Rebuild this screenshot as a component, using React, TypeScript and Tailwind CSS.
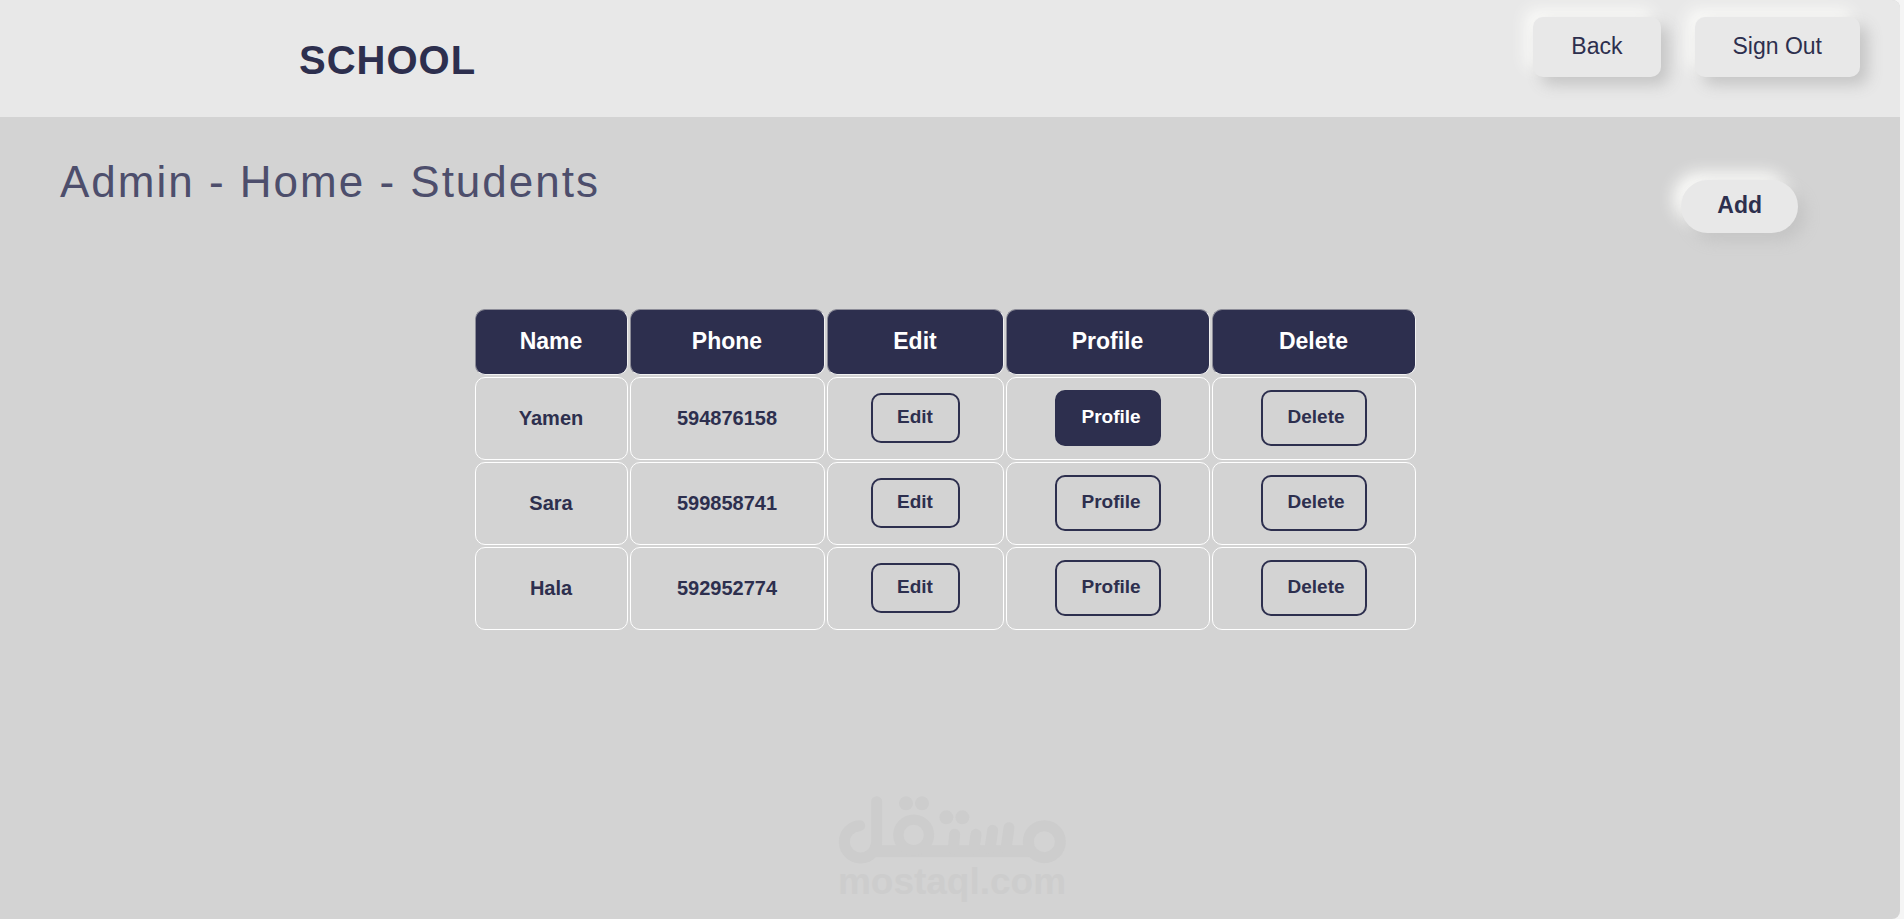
const students = [
  { name: "Yamen", phone: "594876158", active: true },
  { name: "Sara", phone: "599858741", active: false },
  { name: "Hala", phone: "592952774", active: false },
];

export default function App() {
  return (
    <div className="min-h-screen bg-[#f5f5f5] pr-1 font-['Liberation_Sans',Arial,sans-serif] text-[#2d2f4e]">
      <div className="flex min-h-screen flex-col overflow-hidden rounded-r-lg bg-[#d3d3d3]">
        <header className="flex min-h-[117px] items-start justify-between bg-[#e8e8e8] pr-10 pl-[299px]">
          <div className="pt-[30px] text-[40px] leading-[60px] font-bold tracking-[1px]">SCHOOL</div>
          <nav className="flex gap-[34px] pt-[17px]">
            <HeaderButton label="Back" />
            <HeaderButton label="Sign Out" />
          </nav>
        </header>

        <main>
          <div className="flex items-start justify-between pt-[35px] pr-[102px] pl-[60px]">
            <h1 className="text-[44px] leading-[60px] tracking-[2px] text-[#4d4e6c]">Admin - Home - Students</h1>
            <button
              type="button"
              className="mt-[28px] h-[53px] rounded-full bg-[#e8e8e8] px-9 pb-0.5 text-[23px] font-bold shadow-[8px_8px_15px_#c5c5c5,-8px_-8px_15px_#fafaf8]"
            >
              Add
            </button>
          </div>
          <div className="mt-[74px] flex justify-center pr-[10px]">
            <StudentsTable />
          </div>
        </main>

        <footer className="mt-auto flex justify-center pb-[19px] pl-1">
          <Watermark />
        </footer>
      </div>
    </div>
  );
}

function HeaderButton({ label }: { label: string }) {
  return (
    <button
      type="button"
      className="h-[60px] rounded-[10px] bg-[#e8e8e8] px-[38px] pb-0.5 text-[23px] shadow-[8px_8px_15px_#c5c5c5,-8px_-8px_15px_#fafaf8]"
    >
      {label}
    </button>
  );
}

function StudentsTable() {
  return (
    <table className="border-separate border-spacing-[2px] text-center font-bold">
      <thead>
        <tr className="h-[66px] text-[23px] text-white">
          <HeadCell label="Name" width="w-[153px]" />
          <HeadCell label="Phone" width="w-[195px]" />
          <HeadCell label="Edit" width="w-[177px]" />
          <HeadCell label="Profile" width="w-[204px]" />
          <HeadCell label="Delete" width="w-[204px]" />
        </tr>
      </thead>
      <tbody>
        {students.map((s) => (
          <tr key={s.name} className="h-[83px] text-[20px]">
            <td className="rounded-[10px] border border-white p-0 pb-0.5">{s.name}</td>
            <td className="rounded-[10px] border border-white p-0 pb-0.5">{s.phone}</td>
            <td className="rounded-[10px] border border-white p-0 pb-0.5">
              <button
                type="button"
                className="h-[50px] w-[89px] rounded-[10px] border-2 border-[#2d2f4e] align-middle text-[19px]"
              >
                Edit
              </button>
            </td>
            <td className="rounded-[10px] border border-white p-0 pb-0.5">
              <RowButton label="Profile" active={s.active} />
            </td>
            <td className="rounded-[10px] border border-white p-0 pb-0.5">
              <RowButton label="Delete" />
            </td>
          </tr>
        ))}
      </tbody>
    </table>
  );
}

function HeadCell({ label, width }: { label: string; width: string }) {
  return (
    <th
      scope="col"
      className={`${width} rounded-[10px] border border-t-[#8c8c98] border-r-[#f0f0f0] border-b-[#f0f0f0] border-l-[#8c8c98] bg-[#2d2f4e] p-0 pb-0.5`}
    >
      {label}
    </th>
  );
}

function RowButton({ label, active = false }: { label: string; active?: boolean }) {
  return (
    <button
      type="button"
      className={`h-14 w-[106px] rounded-[10px] border-2 border-[#2d2f4e] pl-[25px] text-left align-middle text-[19px] ${
        active ? "bg-[#2d2f4e] text-white" : ""
      }`}
    >
      {label}
    </button>
  );
}

function Watermark() {
  return (
    <div className="flex flex-col items-center text-[#cdcdcd]">
      <svg width="228" height="68" viewBox="54 47 684 204" fill="none" stroke="currentColor" aria-hidden="true">
        <path d="M119 136A48.500 48.500 0 1 0 170 184V64" strokeWidth="33" strokeLinecap="round" strokeLinejoin="round" />
        <path d="M150 213H640" strokeWidth="36" />
        <circle cx="281" cy="164" r="46" strokeWidth="31" />
        <circle cx="673" cy="184" r="48" strokeWidth="33" />
        <path d="M404 162L400 205M468 162L462 205M518 150L510 205M567 142L558 205" strokeWidth="33" strokeLinecap="round" />
        <g fill="currentColor" stroke="none">
          <circle cx="258" cy="69" r="21" />
          <circle cx="306" cy="69" r="21" />
          <circle cx="379" cy="111" r="21" />
          <circle cx="427" cy="111" r="21" />
        </g>
      </svg>
      <span className="text-[37px] leading-[36px] font-bold">mostaql.com</span>
    </div>
  );
}
